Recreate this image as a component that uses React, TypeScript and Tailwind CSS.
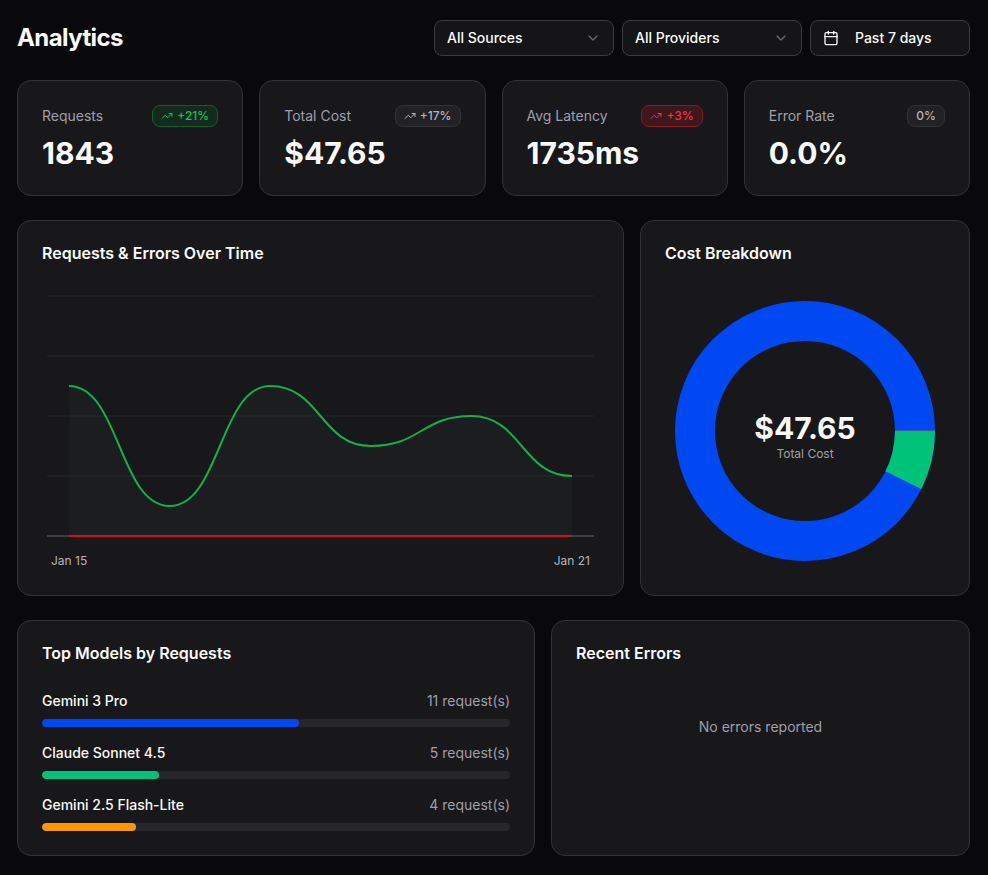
import { useState } from "react";
import { Calendar, ChevronDown, TrendingUp } from "lucide-react";
import { cva } from "class-variance-authority";

type Tone = "good" | "neutral" | "bad";

interface Stat {
  label: string;
  value: string;
  change: string;
  tone: Tone;
  trend: boolean;
}

const STATS: Stat[] = [
  { label: "Requests", value: "1843", change: "+21%", tone: "good", trend: true },
  { label: "Total Cost", value: "$47.65", change: "+17%", tone: "neutral", trend: true },
  { label: "Avg Latency", value: "1735ms", change: "+3%", tone: "bad", trend: true },
  { label: "Error Rate", value: "0.0%", change: "0%", tone: "neutral", trend: false },
];

const MODELS = [
  { name: "Gemini 3 Pro", requests: 11, bar: "bg-[#0048f2]" },
  { name: "Claude Sonnet 4.5", requests: 5, bar: "bg-[#00c37a]" },
  { name: "Gemini 2.5 Flash-Lite", requests: 4, bar: "bg-[#ff9800]" },
];

const REQUESTS_PER_DAY = [5, 1, 5, 3, 4, 2];

const badge = cva(
  "inline-flex h-[22px] items-center gap-1 rounded-lg border px-2 text-xs font-medium",
  {
    variants: {
      tone: {
        good: "border-[#0f5f2e] bg-[#16291f] text-[#05c950]",
        neutral: "border-[#333337] bg-[#222226] text-[#b4b4bb]",
        bad: "border-[#8d1620] bg-[#3c181d] text-[#f9303a]",
      },
    },
  },
);

interface CardProps {
  title?: string;
  className?: string;
  children: React.ReactNode;
}

function Card({ title, className = "", children }: CardProps) {
  return (
    <section
      className={`min-w-0 rounded-[14px] border border-[#333337] bg-[#18181b] p-6 ${className}`}
    >
      {title && (
        <h2 className="mb-[30px] text-base leading-4 font-semibold">{title}</h2>
      )}
      {children}
    </section>
  );
}

interface FilterSelectProps {
  label: string;
  options: string[];
}

function FilterSelect({ label, options }: FilterSelectProps) {
  const [value, setValue] = useState(options[0]);

  return (
    <div className="grid w-[180px] items-center">
      <select
        aria-label={label}
        value={value}
        onChange={(e) => setValue(e.target.value)}
        className="col-start-1 row-start-1 h-9 w-full appearance-none rounded-lg border border-[#3b3b3e] bg-[#151517] px-3 text-sm font-medium text-[#fafafa]"
      >
        {options.map((option) => (
          <option key={option}>{option}</option>
        ))}
      </select>
      <ChevronDown
        size={16}
        strokeWidth={2}
        className="pointer-events-none col-start-1 row-start-1 mr-[13px] justify-self-end text-[#69696d]"
      />
    </div>
  );
}

function StatCard({ label, value, change, tone, trend }: Stat) {
  return (
    <Card>
      <div className="flex items-center justify-between">
        <span className="text-sm text-[#9f9fa9]">{label}</span>
        <span className={badge({ tone })}>
          {trend && <TrendingUp size={12} strokeWidth={2} />}
          {change}
        </span>
      </div>
      <p className="mt-2 text-3xl font-bold">{value}</p>
    </Card>
  );
}

// Plot area: x 27..530, y 5..245, one request is 30 units high
function RequestsChart() {
  const step = 503 / (REQUESTS_PER_DAY.length - 1);
  const points = REQUESTS_PER_DAY.map((n, i) => [27 + i * step, 245 - n * 30]);
  const line = points
    .map(([x, y], i) => {
      if (i === 0) return `M${x},${y}`;
      const [px, py] = points[i - 1];
      const mid = (px + x) / 2;
      return `C${mid},${py} ${mid},${y} ${x},${y}`;
    })
    .join(" ");

  return (
    <div>
      <svg
        viewBox="0 0 557 250"
        preserveAspectRatio="none"
        className="block h-[250px] w-full"
        role="img"
        aria-label="Requests and errors per day"
        fill="none"
      >
        {[5, 65, 125, 185].map((y) => (
          <line key={y} x1="5" x2="552" y1={y} y2={y} stroke="#252728" />
        ))}
        <line x1="5" x2="552" y1="245" y2="245" stroke="#666666" />
        <path d={`${line} L530,245 L27,245 Z`} fill="#70a078" fillOpacity="0.04" />
        <path d={line} stroke="#12b04a" strokeWidth="2" vectorEffect="non-scaling-stroke" />
        <path
          d="M27,245 H530"
          stroke="#d0121d"
          strokeWidth="2"
          vectorEffect="non-scaling-stroke"
        />
      </svg>
      <div className="flex h-[30px] items-center justify-between px-[9px] pt-[10px] text-xs text-[#b4b4bb]">
        <span>Jan 15</span>
        <span>Jan 21</span>
      </div>
    </div>
  );
}

function CostDonut() {
  return (
    <div className="grid place-items-center">
      <svg
        viewBox="0 0 280 280"
        className="col-start-1 row-start-1 size-[280px]"
        role="img"
        aria-label="Cost by provider"
      >
        <circle cx="140" cy="140" r="110" fill="none" stroke="#0048f2" strokeWidth="40" />
        <path
          d="M230,140 H270 A130,130 0 0 1 256.3,198 L220.5,180.2 A90,90 0 0 0 230,140 Z"
          fill="#00c37a"
        />
        <path d="M230,140 H270" stroke="#7d7770" strokeWidth="1" />
      </svg>
      <div className="col-start-1 row-start-1 pt-[10px] text-center">
        <p className="text-3xl font-bold">$47.65</p>
        <p className="text-xs text-[#9f9fa9]">Total Cost</p>
      </div>
    </div>
  );
}

function TopModels() {
  const total = MODELS.reduce((sum, m) => sum + m.requests, 0);

  return (
    <ul className="flex flex-col gap-4">
      {MODELS.map((model) => (
        <li key={model.name}>
          <div className="flex justify-between text-sm">
            <span className="font-medium">{model.name}</span>
            <span className="text-[#9f9fa9]">{model.requests} request(s)</span>
          </div>
          <div className="mt-2 h-2 overflow-hidden rounded-full bg-[#27272a]">
            <div
              className={`h-full rounded-full ${model.bar}`}
              style={{ width: `${(model.requests / total) * 100}%` }}
            />
          </div>
        </li>
      ))}
    </ul>
  );
}

export default function App() {
  return (
    <main className="flex min-h-screen flex-col gap-6 bg-[#09090b] pt-5 pr-[18px] pb-5 pl-[17px] font-['Inter',sans-serif] text-[#fafafa]">
      <header className="flex flex-wrap items-center justify-between gap-2">
        <h1 className="text-2xl font-bold tracking-tight">Analytics</h1>
        <div className="flex flex-wrap gap-2">
          <FilterSelect label="Source" options={["All Sources", "API", "Playground"]} />
          <FilterSelect label="Provider" options={["All Providers", "Google", "Anthropic"]} />
          <button
            type="button"
            className="flex h-9 w-40 items-center gap-4 rounded-lg border border-[#3b3b3e] bg-[#151517] px-3 text-sm font-medium"
          >
            <Calendar size={16} />
            Past 7 days
          </button>
        </div>
      </header>

      <div className="grid grid-cols-2 gap-4 md:grid-cols-4">
        {STATS.map((stat) => (
          <StatCard key={stat.label} {...stat} />
        ))}
      </div>

      <div className="flex flex-col gap-4 md:flex-row">
        <Card title="Requests & Errors Over Time" className="flex-1">
          <RequestsChart />
        </Card>
        <Card title="Cost Breakdown" className="shrink-0">
          <CostDonut />
        </Card>
      </div>

      <div className="grid gap-4 md:grid-cols-[518fr_419fr]">
        <Card title="Top Models by Requests">
          <TopModels />
        </Card>
        <Card title="Recent Errors">
          <p className="py-[26px] text-center text-sm text-[#9f9fa9]">No errors reported</p>
        </Card>
      </div>
    </main>
  );
}
